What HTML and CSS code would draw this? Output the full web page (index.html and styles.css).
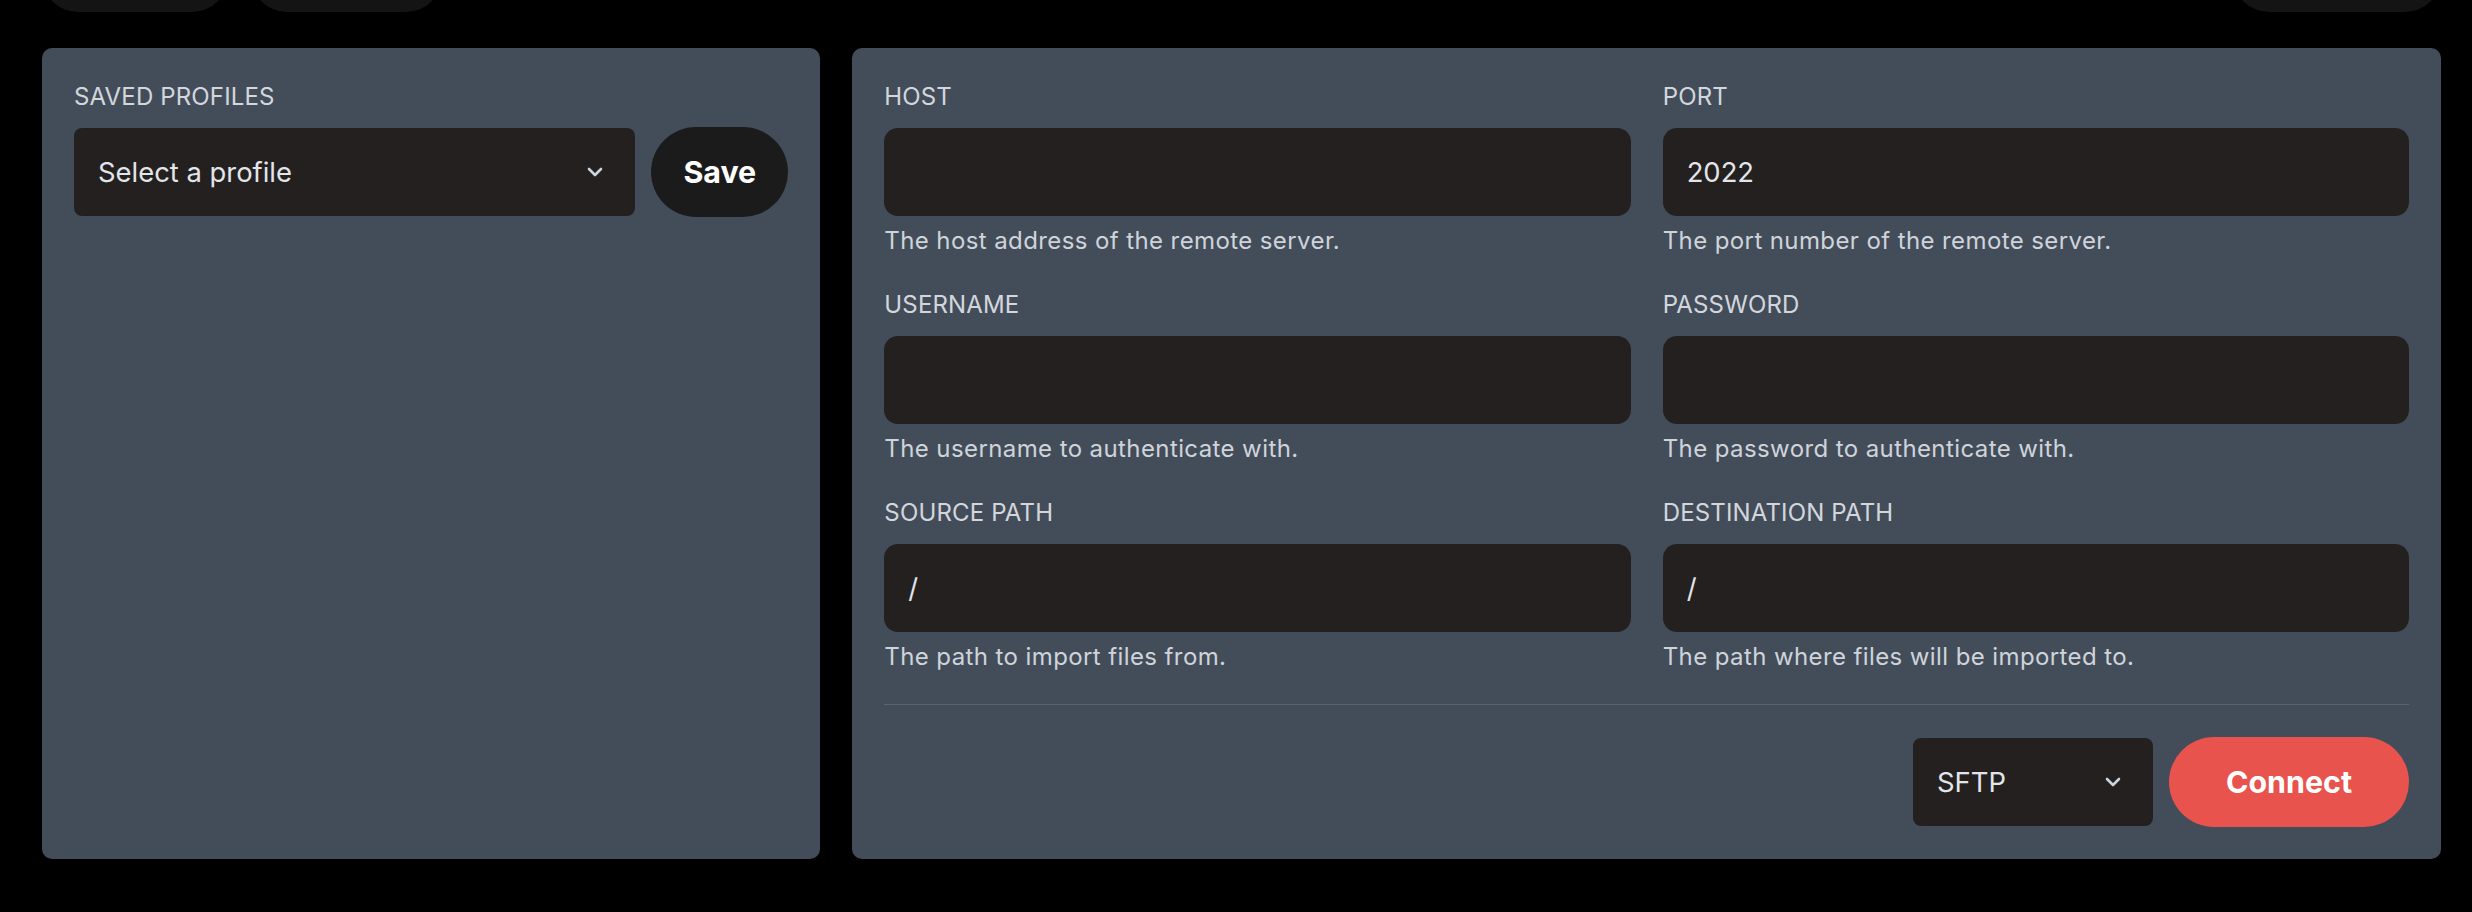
FILE: index.html
```html
<!DOCTYPE html>
<html lang="en">
<head>
<meta charset="utf-8">
<title>Remote import</title>
<link rel="stylesheet" href="styles.css">
</head>
<body>
<div class="page">
  <header class="toolbar">
    <div class="toolbar-group">
      <button class="pill pill-a" type="button"></button>
      <button class="pill pill-b" type="button"></button>
    </div>
    <button class="pill pill-c" type="button"></button>
  </header>

  <main class="layout">
    <section class="card card-profiles">
      <label class="field-label" for="profile">Saved Profiles</label>
      <div class="profile-row">
        <div class="select-wrap select-profile">
          <select class="select" id="profile">
            <option>Select a profile</option>
          </select>
          <svg class="chevron" viewBox="0 0 16 10" width="16" height="10" aria-hidden="true"><path d="M2 2 L8 8 L14 2" /></svg>
        </div>
        <button class="btn btn-save" type="button">Save</button>
      </div>
    </section>

    <section class="card card-connection">
      <div class="fields">
        <div class="field">
          <label class="field-label" for="host">Host</label>
          <input class="input" id="host" type="text" value="">
          <p class="hint">The host address of the remote server.</p>
        </div>
        <div class="field">
          <label class="field-label" for="port">Port</label>
          <input class="input" id="port" type="text" value="2022">
          <p class="hint">The port number of the remote server.</p>
        </div>
        <div class="field">
          <label class="field-label" for="user">Username</label>
          <input class="input" id="user" type="text" value="">
          <p class="hint">The username to authenticate with.</p>
        </div>
        <div class="field">
          <label class="field-label" for="pass">Password</label>
          <input class="input" id="pass" type="password" value="">
          <p class="hint">The password to authenticate with.</p>
        </div>
        <div class="field">
          <label class="field-label" for="src">Source Path</label>
          <input class="input" id="src" type="text" value="/">
          <p class="hint">The path to import files from.</p>
        </div>
        <div class="field">
          <label class="field-label" for="dst">Destination Path</label>
          <input class="input" id="dst" type="text" value="/">
          <p class="hint">The path where files will be imported to.</p>
        </div>
      </div>
      <div class="divider"></div>
      <div class="actions">
        <div class="select-wrap select-protocol">
          <select class="select" aria-label="Protocol">
            <option>SFTP</option>
          </select>
          <svg class="chevron" viewBox="0 0 16 10" width="16" height="10" aria-hidden="true"><path d="M2 2 L8 8 L14 2" /></svg>
        </div>
        <button class="btn btn-connect" type="button">Connect</button>
      </div>
    </section>
  </main>
</div>
</body>
</html>
```

FILE: styles.css
```css
* {
  box-sizing: border-box;
}

html, body {
  margin: 0;
  background: #000;
  height: 100%;
  overflow: hidden;
}

body {
  font-family: Inter, "Noto Sans", "Liberation Sans", sans-serif;
  color: #d1d5db;
}

.page {
  padding: 0 31px 0 42px;
}

.toolbar {
  display: flex;
  justify-content: space-between;
  height: 72px;
  margin-top: -60px;
}

.toolbar-group {
  display: flex;
  gap: 23px;
}

.pill {
  height: 72px;
  border: 0;
  border-radius: 36px;
  background: #151414;
  padding: 0;
}

.pill-a { width: 186px; }
.pill-b { width: 191px; }
.pill-c { width: 208px; }

.layout {
  display: grid;
  grid-template-columns: repeat(3, 1fr);
  gap: 32px;
  margin-top: 36px;
}

.card {
  background: #434d5a;
  border-radius: 10px;
  padding: 32px;
}

.card-connection {
  grid-column: span 2;
}

.field-label {
  display: block;
  font-size: 24px;
  line-height: 32px;
  padding-top: 1px;
  margin-bottom: -1px;
  color: #d3d7dd;
  text-transform: uppercase;
  letter-spacing: 0.15px;
}

.profile-row {
  display: flex;
  align-items: center;
  gap: 16px;
  margin-top: 15px;
}

.select-wrap {
  position: relative;
}

.select-profile {
  flex: 1;
}

.select {
  appearance: none;
  -webkit-appearance: none;
  display: block;
  width: 100%;
  height: 88px;
  border: 0;
  border-radius: 8px;
  background: #23201f;
  color: #e2e5e9;
  font-family: inherit;
  font-size: 27.4px;
  padding: 0 60px 0 24px;
  outline: none;
}

.chevron {
  position: absolute;
  right: 32px;
  top: 50%;
  transform: translateY(-50%);
  fill: none;
  stroke: #cbd3dd;
  stroke-width: 2.6;
  stroke-linecap: round;
  stroke-linejoin: round;
}

.btn {
  border: 0;
  font-family: inherit;
  font-weight: 700;
  font-size: 30.4px;
  color: #fff;
  height: 90px;
  border-radius: 45px;
  cursor: pointer;
}

.btn-save {
  width: 137px;
  background: #1c1b1b;
}

.fields {
  display: grid;
  grid-template-columns: 1fr 1fr;
  column-gap: 32px;
  row-gap: 32px;
}

.field {
  display: flex;
  flex-direction: column;
}

.input {
  display: block;
  width: 100%;
  height: 88px;
  margin-top: 16px;
  border: 0;
  border-radius: 14px;
  background: #23201f;
  color: #e2e5e9;
  font-family: inherit;
  font-size: 27.4px;
  padding: 0 24px;
  outline: none;
}

.hint {
  margin: 8px 0 0;
  font-size: 24px;
  line-height: 32px;
  padding-top: 1px;
  margin-bottom: -1px;
  color: #cfd4da;
  letter-spacing: 0.4px;
}

.divider {
  height: 1px;
  background: #5a636f;
  margin-top: 32px;
}

.actions {
  display: flex;
  justify-content: flex-end;
  align-items: center;
  gap: 16px;
  margin-top: 32px;
}

.select-protocol {
  width: 240px;
}

.btn-connect {
  width: 240px;
  background: #e8534d;
}
```
